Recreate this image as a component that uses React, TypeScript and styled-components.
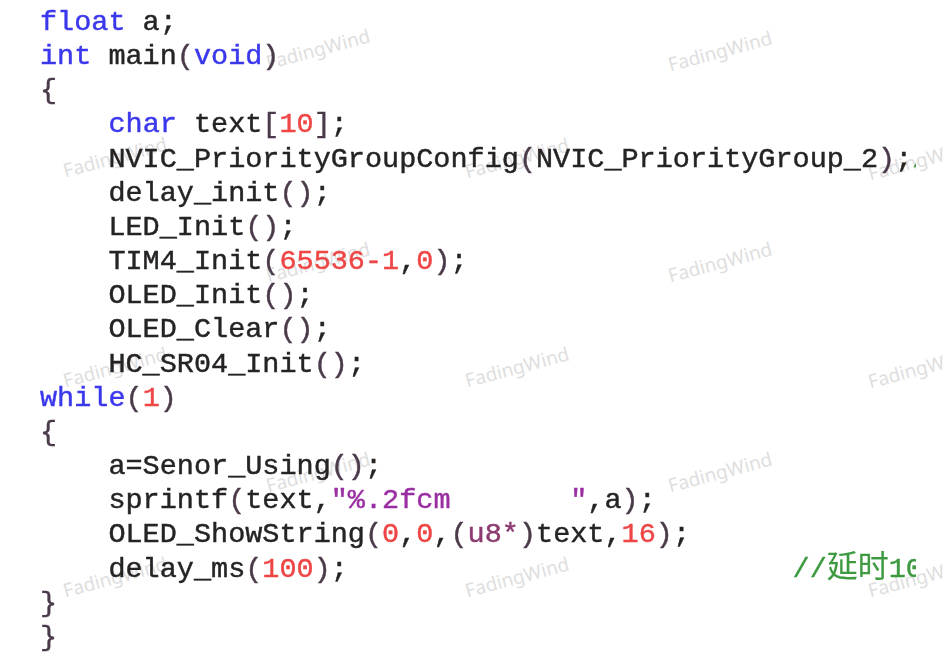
import React from "react";
import styled, { createGlobalStyle } from "styled-components";

const GlobalStyle = createGlobalStyle`
  html, body { margin: 0; padding: 0; background: #ffffff; }
  #root { width: 944px; height: 659px; }
`;

type Kind = "kw" | "id" | "num" | "str" | "punc" | "cast" | "cmt";

const colors: Record<Kind, string> = {
  kw: "#3b38ec",
  id: "#262323",
  num: "#ee4646",
  str: "#9a2fa2",
  punc: "#4a3a4a",
  cast: "#8c3a70",
  cmt: "#3e9a40",
};

const Page = styled.div`
  position: relative;
  width: 944px;
  height: 659px;
  overflow: hidden;
  background: #ffffff;
`;

const WatermarkLayer = styled.div`
  position: absolute;
  inset: 0;
  pointer-events: none;
`;

const Watermark = styled.span`
  position: absolute;
  transform: translate(-50%, -50%) rotate(-15deg);
  font-family: "Noto Sans", "Open Sans", sans-serif;
  font-size: 19px;
  color: #dedede;
  white-space: nowrap;
`;

const CodeView = styled.div`
  position: relative;
  width: 876px;
  height: 653px;
  overflow: hidden;
  padding: 6px 0 0 40px;
  font-family: "Liberation Mono", "Courier New", monospace;
  font-size: 28.5px;
  line-height: 34.17px;
  white-space: pre;
  color: ${colors.id};
  filter: blur(0.35px);
  -webkit-text-stroke: 0.45px currentColor;
`;

const Line = styled.div`
  height: 34.17px;
`;

const Tok = styled.span<{ $k: Kind }>`
  color: ${(p) => colors[p.$k]};
`;

const Cjk = styled.span`
  font-family: "Noto Sans CJK SC", sans-serif;
  font-size: 31px;
  line-height: 0;
  -webkit-text-stroke: 0.2px currentColor;
`;

type T = [Kind, string];
const I = "    ";

const code: T[][] = [
  [["kw", "float"], ["id", " a;"]],
  [["kw", "int"], ["id", " main"], ["punc", "("], ["kw", "void"], ["punc", ")"]],
  [["punc", "{"]],
  [["id", I], ["kw", "char"], ["id", " text"], ["punc", "["], ["num", "10"], ["punc", "]"], ["id", ";"]],
  [["id", I + "NVIC_PriorityGroupConfig"], ["punc", "("], ["id", "NVIC_PriorityGroup_2"], ["punc", ")"], ["id", ";"], ["cmt", "//设置中断优先级分组"]],
  [["id", I + "delay_init"], ["punc", "()"], ["id", ";"]],
  [["id", I + "LED_Init"], ["punc", "()"], ["id", ";"]],
  [["id", I + "TIM4_Init"], ["punc", "("], ["num", "65536-1"], ["id", ","], ["num", "0"], ["punc", ")"], ["id", ";"]],
  [["id", I + "OLED_Init"], ["punc", "()"], ["id", ";"]],
  [["id", I + "OLED_Clear"], ["punc", "()"], ["id", ";"]],
  [["id", I + "HC_SR04_Init"], ["punc", "()"], ["id", ";"]],
  [["kw", "while"], ["punc", "("], ["num", "1"], ["punc", ")"]],
  [["punc", "{"]],
  [["id", I + "a=Senor_Using"], ["punc", "()"], ["id", ";"]],
  [["id", I + "sprintf"], ["punc", "("], ["id", "text,"], ["str", "\"%.2fcm       \""], ["id", ",a"], ["punc", ")"], ["id", ";"]],
  [["id", I + "OLED_ShowString"], ["punc", "("], ["num", "0"], ["id", ","], ["num", "0"], ["id", ","], ["punc", "("], ["cast", "u8*"], ["punc", ")"], ["id", "text,"], ["num", "16"], ["punc", ")"], ["id", ";"]],
  [["id", I + "delay_ms"], ["punc", "("], ["num", "100"], ["punc", ")"], ["id", ";" + " ".repeat(26)], ["cmt", "//延时100ms"]],
  [["punc", "}"]],
  [["punc", "}"]],
];

const marks: [number, number][] = [
  [318, 49], [720, 51],
  [115, 157], [517, 158], [920, 160],
  [318, 262], [720, 262],
  [115, 367], [517, 367], [920, 368],
  [318, 472], [720, 472],
  [115, 577], [517, 577], [920, 577],
];

const renderText = (s: string) => {
  const parts = s.split(/([\u4e00-\u9fff]+)/);
  return parts.map((p, i) => (/[\u4e00-\u9fff]/.test(p) ? <Cjk key={i}>{p}</Cjk> : p));
};

export default function App() {
  return (
    <>
      <GlobalStyle />
      <Page>
        <WatermarkLayer>
          {marks.map(([x, y], i) => (
            <Watermark key={i} style={{ left: x, top: y }}>
              FadingWind
            </Watermark>
          ))}
        </WatermarkLayer>
        <CodeView>
          {code.map((line, li) => (
            <Line key={li}>
              {line.map(([k, t], ti) => (
                <Tok key={ti} $k={k}>
                  {renderText(t)}
                </Tok>
              ))}
            </Line>
          ))}
        </CodeView>
      </Page>
    </>
  );
}
